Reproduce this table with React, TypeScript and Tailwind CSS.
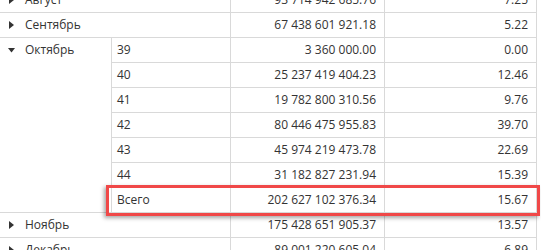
const months = {
  before: [
    { name: "Август", sum: "93 714 942 685.76", pct: "7.25" },
    { name: "Сентябрь", sum: "67 438 601 921.18", pct: "5.22" },
  ],
  after: [
    { name: "Ноябрь", sum: "175 428 651 905.37", pct: "13.57" },
    { name: "Декабрь", sum: "89 001 220 605.04", pct: "6.89" },
  ],
};

const october = [
  { week: "39", sum: "3 360 000.00", pct: "0.00" },
  { week: "40", sum: "25 237 419 404.23", pct: "12.46" },
  { week: "41", sum: "19 782 800 310.56", pct: "9.76" },
  { week: "42", sum: "80 446 475 955.83", pct: "39.70" },
  { week: "43", sum: "45 974 219 473.78", pct: "22.69" },
  { week: "44", sum: "31 182 827 231.94", pct: "15.39" },
];

function RightArrow() {
  return (
    <svg width="5" height="8" viewBox="0 0 5 8" className="shrink-0">
      <polygon points="0,0 5,4 0,8" fill="#333" />
    </svg>
  );
}

function DownArrow() {
  return (
    <svg width="7" height="5" viewBox="0 0 7 5" className="shrink-0">
      <polygon points="0,0 7,0 3.5,4.5" fill="#333" />
    </svg>
  );
}

function MonthRow({ name, sum, pct }: { name: string; sum: string; pct: string }) {
  return (
    <div className="flex h-[25px] border-b border-[#d9d9d9]">
      <div className="flex w-[231px] items-center gap-[11px] border-r border-[#d9d9d9] pl-[9px]">
        <RightArrow />
        <span>{name}</span>
      </div>
      <div className="flex w-[154px] items-center justify-end border-r border-[#d9d9d9] pr-[8px]">
        {sum}
      </div>
      <div className="flex flex-1 items-center justify-end pr-[8px]">{pct}</div>
    </div>
  );
}

function WeekRow({ week, sum, pct }: { week: string; sum: string; pct: string }) {
  return (
    <div className="flex h-[25px] border-b border-[#d9d9d9]">
      <div className="flex w-[119px] items-center border-r border-[#d9d9d9] pl-[5px]">{week}</div>
      <div className="flex w-[154px] items-center justify-end border-r border-[#d9d9d9] pr-[8px]">
        {sum}
      </div>
      <div className="flex flex-1 items-center justify-end pr-[8px]">{pct}</div>
    </div>
  );
}

export default function App() {
  return (
    <div className="h-[250px] w-[541px] overflow-hidden bg-white font-['Open_Sans',sans-serif] text-[12px] text-[#333]">
      <div className="mt-[-12px] w-[537px] border-r border-[#d9d9d9]">
        {months.before.map((m) => (
          <MonthRow key={m.name} {...m} />
        ))}

        {/* Октябрь развёрнут по неделям */}
        <div className="flex">
          <div className="w-[112px] border-r border-b border-[#d9d9d9]">
            <div className="flex h-[24px] items-center gap-[10px] pl-[8px]">
              <DownArrow />
              <span>Октябрь</span>
            </div>
          </div>
          <div className="flex-1">
            {october.map((w) => (
              <WeekRow key={w.week} {...w} />
            ))}
            <div className="relative">
              <WeekRow week="Всего" sum="202 627 102 376.34" pct="15.67" />
              <div className="absolute left-[-6px] top-[-3px] h-[31px] w-[434px] border-[3px] border-[#f04848] shadow-[-2px_2px_4px_rgba(0,0,0,0.35)]" />
            </div>
          </div>
        </div>

        {months.after.map((m) => (
          <MonthRow key={m.name} {...m} />
        ))}
      </div>
    </div>
  );
}
